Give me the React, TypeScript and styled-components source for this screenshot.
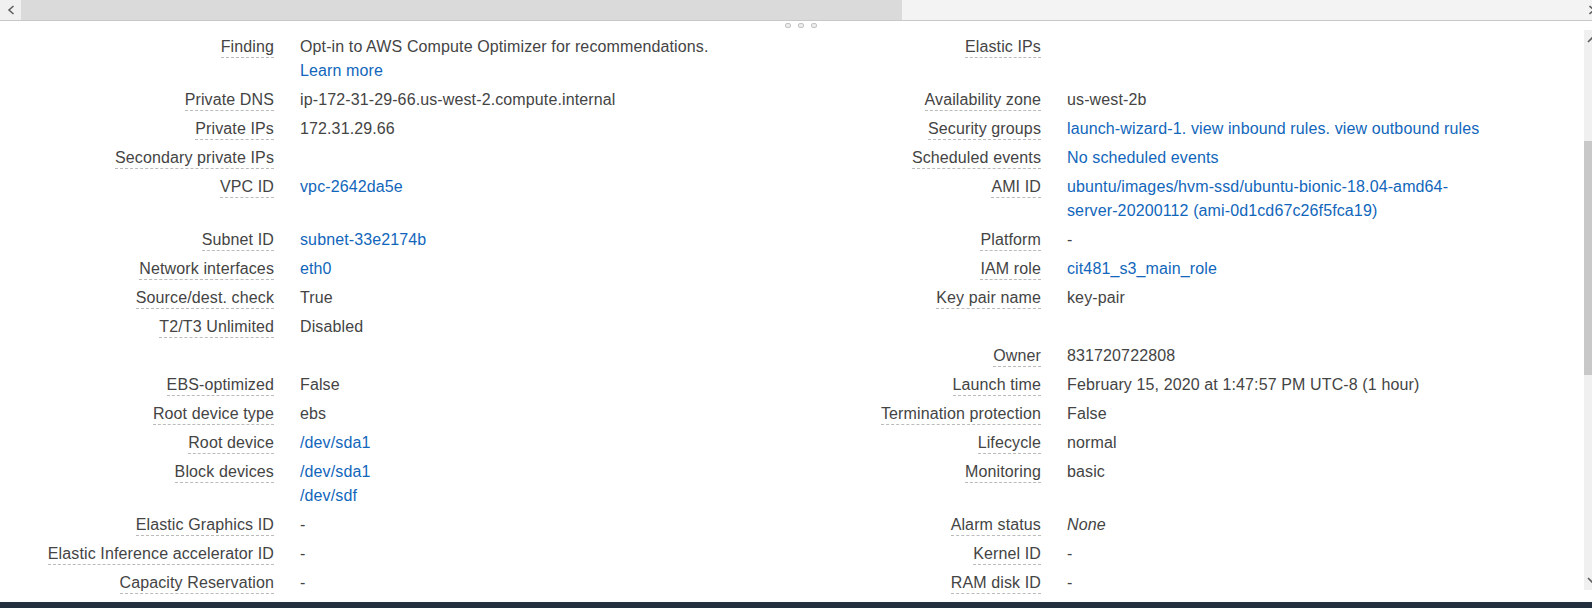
import React from "react";
import styled, { createGlobalStyle } from "styled-components";

const GlobalStyle = createGlobalStyle`
  html, body {
    margin: 0;
    padding: 0;
    background: #ffffff;
    overflow: hidden;
  }
  body {
    font-family: "Liberation Sans", Arial, sans-serif;
    font-size: 16px;
    letter-spacing: 0.12px;
    color: #444444;
  }
`;

const COLOR = {
  TEXT: "#444444",
  LINK: "#1166bb",
  DASH: "#bbbbbb",
  TRACK: "#f3f3f3",
  BUTTON: "#f0f0f0",
  THUMB: "#dadada",
  VTHUMB: "#c8c8c8",
  ARROW: "#606060",
  FOOTER: "#232f3e",
};

const Page = styled.div`
  display: flex;
  flex-direction: column;
  height: 608px;
  width: 100%;
  overflow: hidden;
`;

const HScroll = styled.div`
  display: flex;
  height: 20px;
  flex-shrink: 0;
  background: ${COLOR.TRACK};
  border-bottom: 1px solid #c8c8c8;
`;

const ScrollButton = styled.div`
  display: flex;
  align-items: center;
  justify-content: center;
  width: 21px;
  background: ${COLOR.BUTTON};
`;

const HThumb = styled.div`
  width: 881px;
  background: ${COLOR.THUMB};
`;

const HTrack = styled.div`
  flex: 1;
  display: flex;
  align-items: center;
  justify-content: flex-end;
`;

const Handle = styled.div`
  display: flex;
  align-items: center;
  justify-content: center;
  gap: 7px;
  height: 9px;
  padding-left: 9px;
  flex-shrink: 0;
`;

const Dot = styled.span`
  width: 4px;
  height: 3px;
  border: 1px solid #c4c4c4;
  border-radius: 2px;
  background: #ececec;
`;

const Body = styled.div`
  flex: 1;
  display: flex;
  min-height: 0;
`;

const Panel = styled.div`
  flex: 1;
  padding-top: 3px;
  overflow: hidden;
`;

const Row = styled.div`
  display: grid;
  grid-template-columns: 287px 480px 287px 433px;
  line-height: 24px;
`;

const LabelCell = styled.div`
  padding: 2px 13px 3px 0;
  text-align: right;
  white-space: nowrap;
`;

const Label = styled.span`
  padding-bottom: 2px;
  border-bottom: 1px dashed ${COLOR.DASH};
`;

const ValueCell = styled.div`
  padding: 2px 0 3px 13px;
`;

const Line = styled.div<{ $italic?: boolean }>`
  font-style: ${(props) => (props.$italic ? "italic" : "normal")};
`;

const Link = styled.a`
  color: ${COLOR.LINK};
  text-decoration: none;
  cursor: pointer;
`;

const VScroll = styled.div`
  display: flex;
  flex-direction: column;
  width: 8px;
  margin-bottom: 12px;
  background: #f0f0f0;
  overflow: hidden;
`;

const VButton = styled.div`
  height: 17px;
  flex-shrink: 0;
`;

const VGap = styled.div<{ $size?: number }>`
  flex: ${(props) => (props.$size ? `0 0 ${props.$size}px` : "1")};
`;

const VThumb = styled.div`
  flex: 0 0 234px;
  background: ${COLOR.VTHUMB};
`;

const Footer = styled.div`
  height: 6px;
  flex-shrink: 0;
  background: ${COLOR.FOOTER};
`;

type Part = { text: string; link?: boolean };
type LineData = { parts: Part[]; italic?: boolean };
type Field = { label?: string; lines: LineData[] };
type RowData = { left: Field; right: Field };

const t = (text: string): LineData => ({ parts: [{ text }] });
const l = (text: string): LineData => ({ parts: [{ text, link: true }] });

const rows: RowData[] = [
  {
    left: {
      label: "Finding",
      lines: [t("Opt-in to AWS Compute Optimizer for recommendations."), l("Learn more")],
    },
    right: { label: "Elastic IPs", lines: [] },
  },
  {
    left: { label: "Private DNS", lines: [t("ip-172-31-29-66.us-west-2.compute.internal")] },
    right: { label: "Availability zone", lines: [t("us-west-2b")] },
  },
  {
    left: { label: "Private IPs", lines: [t("172.31.29.66")] },
    right: {
      label: "Security groups",
      lines: [
        {
          parts: [
            { text: "launch-wizard-1.", link: true },
            { text: " " },
            { text: "view inbound rules.", link: true },
            { text: " " },
            { text: "view outbound rules", link: true },
          ],
        },
      ],
    },
  },
  {
    left: { label: "Secondary private IPs", lines: [] },
    right: { label: "Scheduled events", lines: [l("No scheduled events")] },
  },
  {
    left: { label: "VPC ID", lines: [l("vpc-2642da5e")] },
    right: {
      label: "AMI ID",
      lines: [l("ubuntu/images/hvm-ssd/ubuntu-bionic-18.04-amd64-server-20200112 (ami-0d1cd67c26f5fca19)")],
    },
  },
  {
    left: { label: "Subnet ID", lines: [l("subnet-33e2174b")] },
    right: { label: "Platform", lines: [t("-")] },
  },
  {
    left: { label: "Network interfaces", lines: [l("eth0")] },
    right: { label: "IAM role", lines: [l("cit481_s3_main_role")] },
  },
  {
    left: { label: "Source/dest. check", lines: [t("True")] },
    right: { label: "Key pair name", lines: [t("key-pair")] },
  },
  {
    left: { label: "T2/T3 Unlimited", lines: [t("Disabled")] },
    right: { lines: [] },
  },
  {
    left: { lines: [] },
    right: { label: "Owner", lines: [t("831720722808")] },
  },
  {
    left: { label: "EBS-optimized", lines: [t("False")] },
    right: { label: "Launch time", lines: [t("February 15, 2020 at 1:47:57 PM UTC-8 (1 hour)")] },
  },
  {
    left: { label: "Root device type", lines: [t("ebs")] },
    right: { label: "Termination protection", lines: [t("False")] },
  },
  {
    left: { label: "Root device", lines: [l("/dev/sda1")] },
    right: { label: "Lifecycle", lines: [t("normal")] },
  },
  {
    left: { label: "Block devices", lines: [l("/dev/sda1"), l("/dev/sdf")] },
    right: { label: "Monitoring", lines: [t("basic")] },
  },
  {
    left: { label: "Elastic Graphics ID", lines: [t("-")] },
    right: { label: "Alarm status", lines: [{ parts: [{ text: "None" }], italic: true }] },
  },
  {
    left: { label: "Elastic Inference accelerator ID", lines: [t("-")] },
    right: { label: "Kernel ID", lines: [t("-")] },
  },
  {
    left: { label: "Capacity Reservation", lines: [t("-")] },
    right: { label: "RAM disk ID", lines: [t("-")] },
  },
];

const FieldCells = ({ field }: { field: Field }) => (
  <>
    <LabelCell>{field.label && <Label>{field.label}</Label>}</LabelCell>
    <ValueCell>
      {field.lines.map((line, i) => (
        <Line key={i} $italic={line.italic}>
          {line.parts.map((part, j) =>
            part.link ? <Link key={j}>{part.text}</Link> : <React.Fragment key={j}>{part.text}</React.Fragment>
          )}
        </Line>
      ))}
    </ValueCell>
  </>
);

const App = () => (
  <>
    <GlobalStyle />
    <Page>
      <HScroll>
        <ScrollButton>
          <svg width="8" height="10" viewBox="0 0 8 10">
            <polyline points="6.5,1 2,5 6.5,9" fill="none" stroke={COLOR.ARROW} strokeWidth="1.6" />
          </svg>
        </ScrollButton>
        <HThumb />
        <HTrack>
          <svg width="3" height="10" viewBox="0 0 3 10">
            <polyline points="0.5,1 5,5 0.5,9" fill="none" stroke={COLOR.ARROW} strokeWidth="1.6" />
          </svg>
        </HTrack>
      </HScroll>
      <Handle>
        <Dot />
        <Dot />
        <Dot />
      </Handle>
      <Body>
        <Panel>
          {rows.map((row, i) => (
            <Row key={i}>
              <FieldCells field={row.left} />
              <FieldCells field={row.right} />
            </Row>
          ))}
        </Panel>
        <VScroll>
          <VButton>
            <svg width="8" height="17" viewBox="0 0 8 17">
              <polyline points="4,12 8.5,7.5 13,12" fill="none" stroke={COLOR.ARROW} strokeWidth="1.6" />
            </svg>
          </VButton>
          <VGap $size={94} />
          <VThumb />
          <VGap />
          <VButton>
            <svg width="8" height="17" viewBox="0 0 8 17">
              <polyline points="4,5 8.5,9.5 13,5" fill="none" stroke={COLOR.ARROW} strokeWidth="1.6" />
            </svg>
          </VButton>
        </VScroll>
      </Body>
      <Footer />
    </Page>
  </>
);

export default App;
